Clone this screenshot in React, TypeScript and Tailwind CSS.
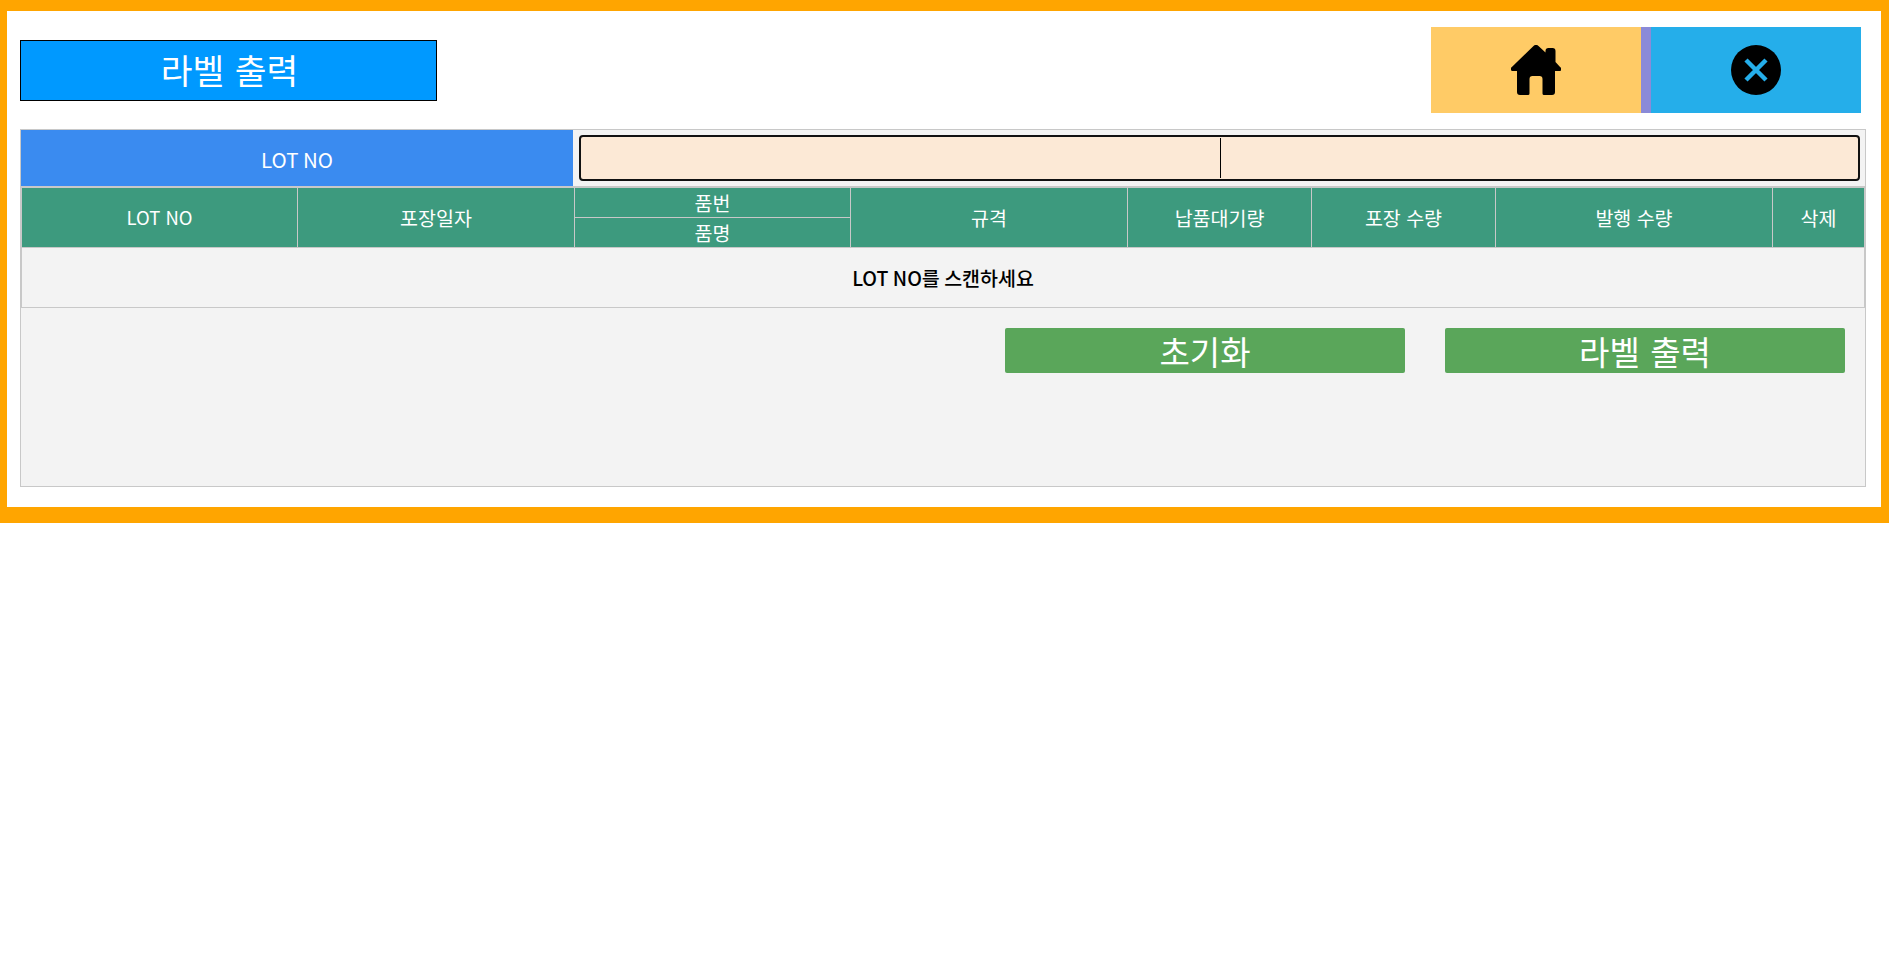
import * as React from 'react';

const FONT = "font-['Noto_Sans_CJK_KR','Noto_Sans',sans-serif]";

function HomeIcon() {
    return (
        <svg width="50" height="50" viewBox="0 0 50 50" fill="#000">
            <path d="M22.5 1a3.5 3.5 0 0 1 5 0L34.5 7.5V6a3 3 0 0 1 3-3h4a3 3 0 0 1 3 3V17L49.3 22.3a2 2 0 0 1-1.4 3.7H44V47a3 3 0 0 1-3 3H33a1.5 1.5 0 0 1-1.5-1.5V34a3 3 0 0 0-3-3h-7a3 3 0 0 0-3 3V48.5A1.5 1.5 0 0 1 17 50H9a3 3 0 0 1-3-3V26H2a2 2 0 0 1-1.4-3.7Z" />
        </svg>
    );
}

function CloseIcon() {
    return (
        <svg width="50" height="50" viewBox="0 0 50 50">
            <circle cx="25" cy="25" r="25" fill="#000" />
            <path d="M15 15L35 35M35 15L15 35" stroke="#25aeea" strokeWidth="4.5" fill="none" />
        </svg>
    );
}

export default function App() {
    return (
        <div className={`h-[523px] border-solid border-[#ffa500] border-t-[11px] border-l-[7px] border-r-[8px] border-b-[16px] bg-white ${FONT}`}>
            {/* Header */}
            <div className="h-[118px] pl-[13px] pr-[20px] flex items-center justify-between">
                <div className="w-[417px] h-[61px] pl-[2px] pb-[2px] bg-[#0099ff] border border-black flex items-center justify-center text-white text-[34.5px] [word-spacing:3px] leading-none">
                    라벨 출력
                </div>
                <div className="flex h-[86px]">
                    <button className="w-[210px] bg-[#ffcb66] flex items-center justify-center"><HomeIcon /></button>
                    <div className="w-[10px] bg-[#8a8ad8]"></div>
                    <button className="w-[210px] bg-[#25aeea] flex items-center justify-center"><CloseIcon /></button>
                </div>
            </div>

            {/* Panel */}
            <div className="ml-[13px] mr-[15px] h-[358px] bg-[#f3f3f3] border border-[#c8c8c8]">
                <div className="flex h-[56px]">
                    <div className="w-[552px] pt-[2px] bg-[#3a8bf0] flex items-center justify-center text-white text-[20.5px]">LOT NO</div>
                    <div className="flex-1 pl-[6px] pr-[5px] pt-[5px]">
                        <div className="h-[46px] pl-[639px] bg-[#fce9d6] border-2 border-[#111] rounded-[4px] flex items-center">
                            <div className="w-px h-[40px] bg-black"></div>
                        </div>
                    </div>
                </div>

                {/* Table */}
                <div className="border-x border-[#c8c8c8] border-t-2 border-b border-b-[#c8c8c8]">
                    <div className="grid grid-cols-[276px_277px_276px_277px_184px_184px_277px_91px] h-[59px] bg-[#3d9a7e] text-white text-[19.5px] [word-spacing:1px]">
                        <div className="border-r border-[#c8c8c8] flex items-center justify-center text-[18.5px]">LOT NO</div>
                        <div className="border-r border-[#c8c8c8] flex items-center justify-center">포장일자</div>
                        <div className="border-r border-[#c8c8c8] flex flex-col">
                            <div className="h-[30px] border-b border-[#c8c8c8] flex items-center justify-center">품번</div>
                            <div className="flex-1 flex items-center justify-center">품명</div>
                        </div>
                        <div className="border-r border-[#c8c8c8] flex items-center justify-center">규격</div>
                        <div className="border-r border-[#c8c8c8] flex items-center justify-center">납품대기량</div>
                        <div className="border-r border-[#c8c8c8] flex items-center justify-center">포장 수량</div>
                        <div className="border-r border-[#c8c8c8] flex items-center justify-center">발행 수량</div>
                        <div className="flex items-center justify-center">삭제</div>
                    </div>
                    <div className="h-[60px] border-t border-[#c8c8c8] flex items-center justify-center text-black text-[19.5px] font-medium">
                        LOT NO를 스캔하세요
                    </div>
                </div>

                {/* Buttons */}
                <div className="flex justify-end gap-[40px] pt-[20px] pr-[20px]">
                    <button className="w-[400px] h-[45px] pt-[2px] bg-[#5aa65a] rounded-[2px] text-white text-[33px] [word-spacing:3px] leading-none">초기화</button>
                    <button className="w-[400px] h-[45px] pt-[2px] bg-[#5aa65a] rounded-[2px] text-white text-[33px] [word-spacing:3px] leading-none">라벨 출력</button>
                </div>
            </div>
        </div>
    );
}
